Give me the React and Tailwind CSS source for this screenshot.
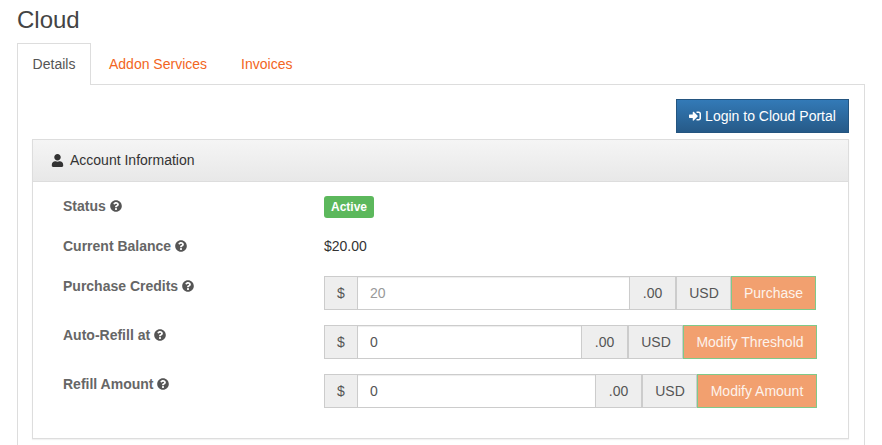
import { FaUser, FaSignInAlt, FaQuestionCircle } from "react-icons/fa";

function Help() {
    return <FaQuestionCircle className="inline-block ml-[4px] text-[12px] text-[#555] align-[-1px]" />;
}

function Label({ children }) {
    return (
        <div className="w-[261px] shrink-0 text-[14px] leading-5 font-bold text-[#666]">
            {children}
            <Help />
        </div>
    );
}

function Addon({ children, className = "" }) {
    return (
        <span className={`flex items-center justify-center h-[34px] bg-[#eee] border border-[#ccc] text-[14px] text-[#555] ${className}`}>
            {children}
        </span>
    );
}

function MoneyInput({ value, placeholder, action, actionWidth, total = "w-[493px]" }) {
    return (
        <div className={`flex ${total}`}>
            <Addon className="w-[34px] shrink-0">$</Addon>
            <input
                readOnly
                value={value}
                placeholder={placeholder}
                className="flex-1 min-w-0 h-[34px] px-3 border-y border-[#ccc] bg-white text-[14px] text-[#555] placeholder:text-[#999] shadow-[inset_0_1px_1px_rgba(0,0,0,0.075)] outline-none"
            />
            <Addon className="w-[47px] shrink-0">.00</Addon>
            <Addon className="w-[56px] shrink-0 -ml-px border-l-2 pl-px">USD</Addon>
            <button className={`h-[34px] shrink-0 bg-[#f2a06f] border border-[#7fc98a] text-[14px] text-[#fdf3ec] ${actionWidth}`}>
                {action}
            </button>
        </div>
    );
}

export default function App() {
    return (
        <div className="w-[882px] h-[445px] overflow-hidden bg-white px-[17px] font-['Liberation_Sans',Arial,sans-serif] text-[14px] text-[#333]">
            <h1 className="pt-[6px] h-[43px] text-[24px] leading-[27px] font-normal text-[#444]">Cloud</h1>

            {/* Tabs */}
            <div className="flex h-[42px] w-[848px] border-b border-[#ddd]">
                <div className="h-[42px] w-[74px] flex items-center justify-center bg-white border border-[#ddd] border-b-0 text-[#555]">
                    Details
                </div>
                <div className="h-[41px] flex items-center pt-px pl-[18px] pr-[17px] text-[#f26522]">Addon Services</div>
                <div className="h-[41px] flex items-center pt-px pl-[17px] text-[#f26522]">Invoices</div>
            </div>

            <div className="w-[848px] h-[400px] border-x border-[#ddd] pt-[14px] pl-[14px] pr-[15px]">
                <div className="flex justify-end mb-[6px]">
                    <button className="flex items-center justify-center w-[173px] h-[34px] bg-gradient-to-b from-[#337ab7] to-[#265a88] border border-[#245580] text-white text-[14px]">
                        <FaSignInAlt className="text-[12px] mr-[4px]" />
                        Login to Cloud Portal
                    </button>
                </div>

                {/* Account panel */}
                <div className="w-[817px] h-[300px] border border-[#ddd] shadow-[0_1px_1px_rgba(0,0,0,0.05)]">
                    <div className="flex items-center h-[42px] pl-[18px] bg-gradient-to-b from-[#f5f5f5] to-[#e8e8e8] border-b border-[#ddd] text-[#333]">
                        <FaUser className="text-[13px] mr-[6px]" />
                        Account Information
                    </div>

                    <div className="pt-[14px] pl-[30px]">
                        <div className="flex h-[25px] mb-[15px]">
                            <Label>Status</Label>
                            <span className="flex items-center justify-center w-[50px] h-[22px] rounded-[3px] bg-[#5cb85c] text-white text-[12px] font-bold">
                                Active
                            </span>
                        </div>
                        <div className="flex h-[25px] mb-[15px]">
                            <Label>Current Balance</Label>
                            <span className="leading-5 text-[#333]">$20.00</span>
                        </div>
                        <div className="flex mb-[15px]">
                            <Label>Purchase Credits</Label>
                            <MoneyInput placeholder="20" action="Purchase" actionWidth="w-[85px]" total="w-[492px]" />
                        </div>
                        <div className="flex mb-[15px]">
                            <Label>Auto-Refill at</Label>
                            <MoneyInput value="0" action="Modify Threshold" actionWidth="w-[134px]" />
                        </div>
                        <div className="flex">
                            <Label>Refill Amount</Label>
                            <MoneyInput value="0" action="Modify Amount" actionWidth="w-[120px]" />
                        </div>
                    </div>
                </div>
            </div>
        </div>
    );
}
